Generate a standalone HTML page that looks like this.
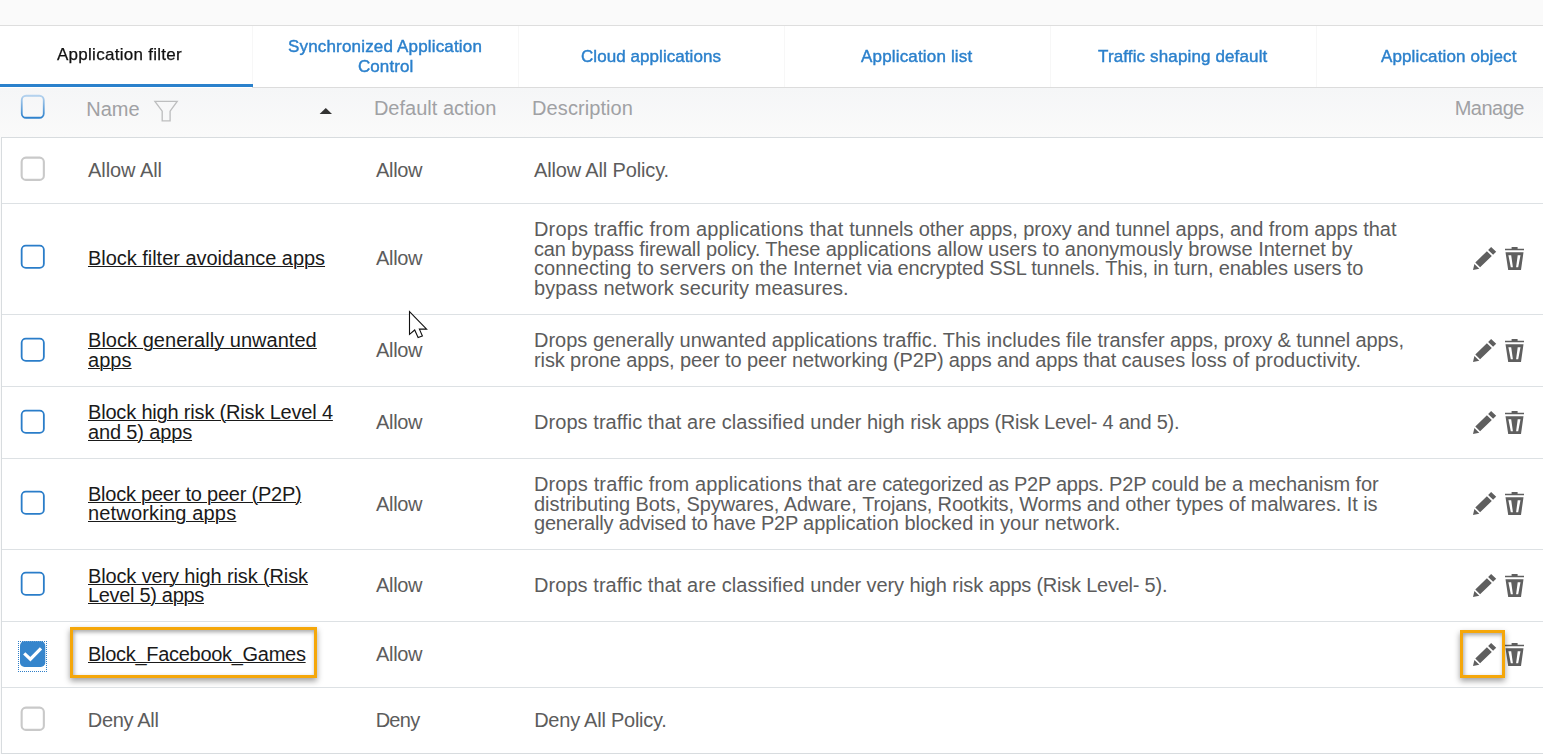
<!DOCTYPE html>
<html lang="en"><head><meta charset="utf-8"><title>Application filter</title>
<style>
html,body{margin:0;padding:0}
body{width:1543px;height:754px;overflow:hidden;background:#fff;position:relative;font-family:"Liberation Sans",Arial,sans-serif;}
.a{position:absolute;display:block}
.t{position:absolute;white-space:pre;line-height:24px;height:24px}
.tab{will-change:transform;font-size:17px;color:#2b80cc;-webkit-text-stroke:0.42px #2b80cc}
.tab.act{color:#111;-webkit-text-stroke:0.25px #111}
.hd{font-size:20px;color:#a0a1a4}
.tx{font-size:20px;color:#5c5c5c}
.lk{font-size:20px;color:#1a1a1a;text-decoration:underline;text-decoration-thickness:1px;text-underline-offset:0.5px;text-decoration-skip-ink:auto}
.hl{position:absolute;border:3px solid #f5a70a;box-sizing:border-box;box-shadow:0 3px 6px rgba(0,0,0,.38), inset 1px 2px 4px rgba(0,0,0,.36)}
</style></head><body>

<div class="a" style="left:0;top:0;width:1543px;height:25px;background:#fafafa"></div>
<div class="a" style="left:0;top:25px;width:1543px;height:1px;background:#dedede"></div>
<div class="a" style="left:252px;top:26px;width:1px;height:61px;background:#f7f7f7"></div>
<div class="a" style="left:518px;top:26px;width:1px;height:61px;background:#f7f7f7"></div>
<div class="a" style="left:784px;top:26px;width:1px;height:61px;background:#f7f7f7"></div>
<div class="a" style="left:1050px;top:26px;width:1px;height:61px;background:#f7f7f7"></div>
<div class="a" style="left:1316px;top:26px;width:1px;height:61px;background:#f7f7f7"></div>
<div class="a" style="left:252px;top:87px;width:1291px;height:1px;background:#dcdcdc"></div>
<div class="a" style="left:0;top:84px;width:253px;height:3px;background:#2b81cc"></div>
<div class="a" style="left:0;top:88px;width:1543px;height:49px;background:linear-gradient(#f5f6f7,#fafafa)"></div>
<div class="a" style="left:0;top:137px;width:1px;height:617px;background:#fbfbfb"></div>
<div class="a" style="left:1px;top:137px;width:1542px;height:616px;border-left:1px solid #d8dcdf;border-top:1px solid #d8dcdf;border-bottom:1px solid #d8dcdf;box-sizing:content-box;height:615px"></div>
<div class="a" style="left:2px;top:203px;width:1541px;height:1px;background:#dde1e4"></div>
<div class="a" style="left:2px;top:314px;width:1541px;height:1px;background:#dde1e4"></div>
<div class="a" style="left:2px;top:386px;width:1541px;height:1px;background:#dde1e4"></div>
<div class="a" style="left:2px;top:458px;width:1541px;height:1px;background:#dde1e4"></div>
<div class="a" style="left:2px;top:549px;width:1541px;height:1px;background:#dde1e4"></div>
<div class="a" style="left:2px;top:621px;width:1541px;height:1px;background:#dde1e4"></div>
<div class="a" style="left:2px;top:687px;width:1541px;height:1px;background:#dde1e4"></div>
<svg class="a" style="left:20.30px;top:94.00px" width="25.5" height="25.5" viewBox="0 0 25.5 25.5"><defs><linearGradient id="hg" x1="0" y1="0" x2="0" y2="1"><stop offset="0" stop-color="#b4d2ee"/><stop offset="1" stop-color="#2f82cd"/></linearGradient></defs><rect x="1.75" y="1.75" width="22" height="22" rx="4.3" fill="none" stroke="url(#hg)" stroke-width="1.8"/></svg>
<svg class="a" style="left:153px;top:99px" width="26" height="25" viewBox="0 0 26 25"><path d="M1.9 2.3 H24.2 L17.1 12.2 V21.9 H9.2 V12.2 Z" fill="none" stroke="#bdbebf" stroke-width="1.35" stroke-linejoin="miter"/></svg>
<svg class="a" style="left:319px;top:107px" width="14" height="8" viewBox="0 0 14 8"><path d="M0.6 7 L6.8 0.9 L13 7 Z" fill="#333"/></svg>
<svg class="a" style="left:19.95px;top:156.25px" width="25.5" height="25.5" viewBox="0 0 25.5 25.5"><rect x="1.65" y="1.65" width="22.2" height="22.2" rx="4.2" fill="#fff" stroke="#c9c9c9" stroke-width="2.1"/></svg>
<svg class="a" style="left:20.15px;top:244.35px" width="25.5" height="25.5" viewBox="0 0 25.5 25.5"><rect x="1.65" y="1.65" width="22.2" height="22.2" rx="4.2" fill="#fff" stroke="#2a7dc9" stroke-width="1.8"/></svg>
<svg class="a" style="left:20.15px;top:336.85px" width="25.5" height="25.5" viewBox="0 0 25.5 25.5"><rect x="1.65" y="1.65" width="22.2" height="22.2" rx="4.2" fill="#fff" stroke="#2a7dc9" stroke-width="1.8"/></svg>
<svg class="a" style="left:20.15px;top:408.85px" width="25.5" height="25.5" viewBox="0 0 25.5 25.5"><rect x="1.65" y="1.65" width="22.2" height="22.2" rx="4.2" fill="#fff" stroke="#2a7dc9" stroke-width="1.8"/></svg>
<svg class="a" style="left:20.15px;top:489.65px" width="25.5" height="25.5" viewBox="0 0 25.5 25.5"><rect x="1.65" y="1.65" width="22.2" height="22.2" rx="4.2" fill="#fff" stroke="#2a7dc9" stroke-width="1.8"/></svg>
<svg class="a" style="left:20.15px;top:571.35px" width="25.5" height="25.5" viewBox="0 0 25.5 25.5"><rect x="1.65" y="1.65" width="22.2" height="22.2" rx="4.2" fill="#fff" stroke="#2a7dc9" stroke-width="1.8"/></svg>
<svg class="a" style="left:19.95px;top:706.25px" width="25.5" height="25.5" viewBox="0 0 25.5 25.5"><rect x="1.65" y="1.65" width="22.2" height="22.2" rx="4.2" fill="#fff" stroke="#c9c9c9" stroke-width="2.1"/></svg>
<div class="a" style="left:18px;top:641px;width:27px;height:29px;border:1px dotted #2f7fc8"></div>
<svg class="a" style="left:19px;top:640px" width="28" height="28" viewBox="0 0 28 28"><rect x="1" y="1.2" width="25.3" height="25.7" rx="4.5" fill="#3585cc"/><path d="M5.2 13.4 L11.4 19.2 L22 8.3" fill="none" stroke="#fff" stroke-width="3.2"/></svg>
<svg class="a" style="left:1472.9px;top:247.00px" width="24" height="24" viewBox="0 0 24 24"><path d="M18.1 0 L23.2 4.7 L20.1 7.7 L15.1 2.9 Z M13.9 4.2 L18.8 9 L7.1 20.3 L2.3 15.5 Z M1.4 16.9 L6.3 21.7 L0 23 Z" fill="#5f5f5f"/></svg><svg class="a" style="left:1505px;top:247.00px" width="20" height="24" viewBox="0 0 20 24"><path fill="#5f5f5f" fill-rule="evenodd" d="M6.6 0 H12.6 V1.7 H19 V3.2 H0 V1.7 H6.6 Z M0.5 5.2 H18.5 L16 23 H3.2 Z M3.4 8.2 L5.8 20.2 H7.9 L6.2 8.2 Z M12.7 8.2 L11.1 20.2 H13.2 L15.5 8.2 Z"/></svg>
<svg class="a" style="left:1472.9px;top:338.50px" width="24" height="24" viewBox="0 0 24 24"><path d="M18.1 0 L23.2 4.7 L20.1 7.7 L15.1 2.9 Z M13.9 4.2 L18.8 9 L7.1 20.3 L2.3 15.5 Z M1.4 16.9 L6.3 21.7 L0 23 Z" fill="#5f5f5f"/></svg><svg class="a" style="left:1505px;top:338.50px" width="20" height="24" viewBox="0 0 20 24"><path fill="#5f5f5f" fill-rule="evenodd" d="M6.6 0 H12.6 V1.7 H19 V3.2 H0 V1.7 H6.6 Z M0.5 5.2 H18.5 L16 23 H3.2 Z M3.4 8.2 L5.8 20.2 H7.9 L6.2 8.2 Z M12.7 8.2 L11.1 20.2 H13.2 L15.5 8.2 Z"/></svg>
<svg class="a" style="left:1472.9px;top:410.50px" width="24" height="24" viewBox="0 0 24 24"><path d="M18.1 0 L23.2 4.7 L20.1 7.7 L15.1 2.9 Z M13.9 4.2 L18.8 9 L7.1 20.3 L2.3 15.5 Z M1.4 16.9 L6.3 21.7 L0 23 Z" fill="#5f5f5f"/></svg><svg class="a" style="left:1505px;top:410.50px" width="20" height="24" viewBox="0 0 20 24"><path fill="#5f5f5f" fill-rule="evenodd" d="M6.6 0 H12.6 V1.7 H19 V3.2 H0 V1.7 H6.6 Z M0.5 5.2 H18.5 L16 23 H3.2 Z M3.4 8.2 L5.8 20.2 H7.9 L6.2 8.2 Z M12.7 8.2 L11.1 20.2 H13.2 L15.5 8.2 Z"/></svg>
<svg class="a" style="left:1472.9px;top:492.00px" width="24" height="24" viewBox="0 0 24 24"><path d="M18.1 0 L23.2 4.7 L20.1 7.7 L15.1 2.9 Z M13.9 4.2 L18.8 9 L7.1 20.3 L2.3 15.5 Z M1.4 16.9 L6.3 21.7 L0 23 Z" fill="#5f5f5f"/></svg><svg class="a" style="left:1505px;top:492.00px" width="20" height="24" viewBox="0 0 20 24"><path fill="#5f5f5f" fill-rule="evenodd" d="M6.6 0 H12.6 V1.7 H19 V3.2 H0 V1.7 H6.6 Z M0.5 5.2 H18.5 L16 23 H3.2 Z M3.4 8.2 L5.8 20.2 H7.9 L6.2 8.2 Z M12.7 8.2 L11.1 20.2 H13.2 L15.5 8.2 Z"/></svg>
<svg class="a" style="left:1472.9px;top:573.50px" width="24" height="24" viewBox="0 0 24 24"><path d="M18.1 0 L23.2 4.7 L20.1 7.7 L15.1 2.9 Z M13.9 4.2 L18.8 9 L7.1 20.3 L2.3 15.5 Z M1.4 16.9 L6.3 21.7 L0 23 Z" fill="#5f5f5f"/></svg><svg class="a" style="left:1505px;top:573.50px" width="20" height="24" viewBox="0 0 20 24"><path fill="#5f5f5f" fill-rule="evenodd" d="M6.6 0 H12.6 V1.7 H19 V3.2 H0 V1.7 H6.6 Z M0.5 5.2 H18.5 L16 23 H3.2 Z M3.4 8.2 L5.8 20.2 H7.9 L6.2 8.2 Z M12.7 8.2 L11.1 20.2 H13.2 L15.5 8.2 Z"/></svg>
<svg class="a" style="left:1472.9px;top:642.50px" width="24" height="24" viewBox="0 0 24 24"><path d="M18.1 0 L23.2 4.7 L20.1 7.7 L15.1 2.9 Z M13.9 4.2 L18.8 9 L7.1 20.3 L2.3 15.5 Z M1.4 16.9 L6.3 21.7 L0 23 Z" fill="#5f5f5f"/></svg><svg class="a" style="left:1505px;top:642.50px" width="20" height="24" viewBox="0 0 20 24"><path fill="#5f5f5f" fill-rule="evenodd" d="M6.6 0 H12.6 V1.7 H19 V3.2 H0 V1.7 H6.6 Z M0.5 5.2 H18.5 L16 23 H3.2 Z M3.4 8.2 L5.8 20.2 H7.9 L6.2 8.2 Z M12.7 8.2 L11.1 20.2 H13.2 L15.5 8.2 Z"/></svg>
<div class="hl" style="left:70px;top:627px;width:247px;height:51px"></div>
<div class="hl" style="left:1460px;top:630px;width:45px;height:48px"></div>
<span id="t1" class="t tab act" style="left:57.00px;top:43px;letter-spacing:0.272px">Application filter</span>
<span id="t2a" class="t tab" style="left:288.00px;top:35px;letter-spacing:0.170px">Synchronized Application</span>
<span id="t2b" class="t tab" style="left:358.00px;top:55px;letter-spacing:0.064px">Control</span>
<span id="t3" class="t tab" style="left:581.00px;top:45px;letter-spacing:0.061px">Cloud applications</span>
<span id="t4" class="t tab" style="left:861.00px;top:45px;letter-spacing:0.169px">Application list</span>
<span id="t5" class="t tab" style="left:1098.00px;top:45px;letter-spacing:0.134px">Traffic shaping default</span>
<span id="t6" class="t tab" style="left:1381.00px;top:45px;letter-spacing:0.125px">Application object</span>
<span id="h1" class="t hd" style="left:86.35px;top:97px;letter-spacing:-0.058px">Name</span>
<span id="h2" class="t hd" style="left:373.88px;top:96px;letter-spacing:0.010px">Default action</span>
<span id="h3" class="t hd" style="left:532.10px;top:96px;letter-spacing:0.075px">Description</span>
<span id="h4" class="t hd" style="left:1454.66px;top:96px;letter-spacing:-0.513px">Manage</span>
<span id="r1n" class="t tx" style="left:88.00px;top:158px;letter-spacing:-0.059px">Allow All</span>
<span id="r1a" class="t tx" style="left:376.00px;top:158px;letter-spacing:-0.315px">Allow</span>
<span id="r1d" class="t tx" style="left:534.00px;top:158px;letter-spacing:-0.150px">Allow All Policy.</span>
<span id="r2n" class="t lk" style="left:88.00px;top:246px;letter-spacing:-0.032px">Block filter avoidance apps</span>
<span id="r2a" class="t tx" style="left:376.00px;top:246px;letter-spacing:-0.315px">Allow</span>
<span id="r2d1_0" class="t tx" style="left:534.00px;top:217px;letter-spacing:0.180px">Drops traffic from applications that </span>
<span id="r2d1_1" class="t tx" style="left:849.34px;top:217px;letter-spacing:-0.093px">tunnels other apps, proxy and </span>
<span id="r2d1_2" class="t tx" style="left:1115.61px;top:217px;letter-spacing:-0.013px">tunnel apps, and from apps that</span>
<span id="r2d2_0" class="t tx" style="left:534.00px;top:237px;letter-spacing:-0.130px">can bypass firewall policy. These </span>
<span id="r2d2_1" class="t tx" style="left:825.63px;top:237px;letter-spacing:0.007px">applications allow users to anonymously </span>
<span id="r2d2_2" class="t tx" style="left:1188.35px;top:237px;letter-spacing:-0.024px">browse Internet by</span>
<span id="r2d3_0" class="t tx" style="left:534.00px;top:256px;letter-spacing:0.078px">connecting to servers on the Internet </span>
<span id="r2d3_1" class="t tx" style="left:867.18px;top:256px;letter-spacing:-0.171px">via encrypted SSL tunnels. </span>
<span id="r2d3_2" class="t tx" style="left:1105.30px;top:256px;letter-spacing:-0.145px">This, in turn, enables users to</span>
<span id="r2d4" class="t tx" style="left:534.00px;top:276px;letter-spacing:0.070px">bypass network security measures.</span>
<span id="r3n1" class="t lk" style="left:88.00px;top:328px;letter-spacing:0.036px">Block generally unwanted</span>
<span id="r3n2" class="t lk" style="left:88.00px;top:348px;letter-spacing:0.056px">apps</span>
<span id="r3a" class="t tx" style="left:376.00px;top:338px;letter-spacing:-0.315px">Allow</span>
<span id="r3d1_0" class="t tx" style="left:534.00px;top:328px;letter-spacing:-0.004px">Drops generally unwanted applications </span>
<span id="r3d1_1" class="t tx" style="left:882.93px;top:328px;letter-spacing:0.069px">traffic. This includes file </span>
<span id="r3d1_2" class="t tx" style="left:1097.56px;top:328px;letter-spacing:-0.110px">transfer apps, proxy &amp; tunnel apps,</span>
<span id="r3d2_0" class="t tx" style="left:534.00px;top:348px;letter-spacing:-0.108px">risk prone apps, peer to peer networking </span>
<span id="r3d2_1" class="t tx" style="left:893.10px;top:348px;letter-spacing:-0.160px">(P2P) apps and apps that </span>
<span id="r3d2_2" class="t tx" style="left:1121.47px;top:348px;letter-spacing:0.081px">causes loss of productivity.</span>
<span id="r4n1" class="t lk" style="left:88.00px;top:400px;letter-spacing:-0.180px">Block high risk (Risk Level 4</span>
<span id="r4n2" class="t lk" style="left:88.00px;top:420px;letter-spacing:-0.144px">and 5) apps</span>
<span id="r4a" class="t tx" style="left:376.00px;top:410px;letter-spacing:-0.315px">Allow</span>
<span id="r4d_0" class="t tx" style="left:534.00px;top:410px;letter-spacing:0.062px">Drops traffic that are classified </span>
<span id="r4d_1" class="t tx" style="left:810.34px;top:410px;letter-spacing:-0.024px">under high risk </span>
<span id="r4d_2" class="t tx" style="left:946.70px;top:410px;letter-spacing:-0.238px">apps (Risk Level- 4 and 5).</span>
<span id="r5n1" class="t lk" style="left:88.00px;top:482px;letter-spacing:-0.231px">Block peer to peer (P2P)</span>
<span id="r5n2" class="t lk" style="left:88.00px;top:501px;letter-spacing:0.178px">networking apps</span>
<span id="r5a" class="t tx" style="left:376.00px;top:492px;letter-spacing:-0.315px">Allow</span>
<span id="r5d1_0" class="t tx" style="left:534.00px;top:472px;letter-spacing:0.127px">Drops traffic from applications that are </span>
<span id="r5d1_1" class="t tx" style="left:882.33px;top:472px;letter-spacing:-0.262px">categorized as P2P apps. </span>
<span id="r5d1_2" class="t tx" style="left:1108.90px;top:472px;letter-spacing:-0.085px">P2P could be a mechanism for</span>
<span id="r5d2_0" class="t tx" style="left:534.00px;top:492px;letter-spacing:-0.054px">distributing Bots, Spywares, Adware, </span>
<span id="r5d2_1" class="t tx" style="left:862.17px;top:492px;letter-spacing:-0.178px">Trojans, Rootkits, Worms </span>
<span id="r5d2_2" class="t tx" style="left:1086.64px;top:492px;letter-spacing:-0.076px">and other types of malwares. It is</span>
<span id="r5d3_0" class="t tx" style="left:534.00px;top:511px;letter-spacing:-0.209px">generally advised to have P2P </span>
<span id="r5d3_1" class="t tx" style="left:803.11px;top:511px;letter-spacing:0.008px">application blocked in your network.</span>
<span id="r6n1" class="t lk" style="left:88.00px;top:564px;letter-spacing:-0.135px">Block very high risk (Risk</span>
<span id="r6n2" class="t lk" style="left:88.00px;top:583px;letter-spacing:-0.317px">Level 5) apps</span>
<span id="r6a" class="t tx" style="left:376.00px;top:573px;letter-spacing:-0.315px">Allow</span>
<span id="r6d_0" class="t tx" style="left:534.00px;top:573px;letter-spacing:0.062px">Drops traffic that are classified </span>
<span id="r6d_1" class="t tx" style="left:810.34px;top:573px;letter-spacing:-0.086px">under very high risk </span>
<span id="r6d_2" class="t tx" style="left:988.63px;top:573px;letter-spacing:-0.227px">apps (Risk Level- 5).</span>
<span id="r7n" class="t lk" style="left:88.00px;top:642px;letter-spacing:-0.292px">Block_Facebook_Games</span>
<span id="r7a" class="t tx" style="left:376.00px;top:642px;letter-spacing:-0.315px">Allow</span>
<span id="r8n" class="t tx" style="left:87.82px;top:708px;letter-spacing:-0.337px">Deny All</span>
<span id="r8a" class="t tx" style="left:375.65px;top:708px;letter-spacing:-0.714px">Deny</span>
<span id="r8d" class="t tx" style="left:534.18px;top:708px;letter-spacing:-0.243px">Deny All Policy.</span>
<svg class="a" style="left:405px;top:308px" width="26" height="34" viewBox="405 308 26 34"><path d="M409.5 311.6 V334.4 L414.7 330 L418.1 337.5 L422.4 336 L419.4 329.1 H426.6 Z" fill="#fff" stroke="#111" stroke-width="1.1" stroke-linejoin="miter"/></svg>
</body></html>
